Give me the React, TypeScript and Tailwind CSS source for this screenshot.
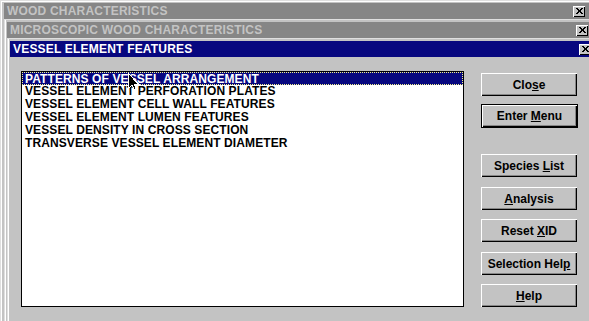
import React from 'react'

type TitleProps = { title: string; active?: boolean }

const ITEMS = [
  'PATTERNS OF VESSEL ARRANGEMENT',
  'VESSEL ELEMENT PERFORATION PLATES',
  'VESSEL ELEMENT CELL WALL FEATURES',
  'VESSEL ELEMENT LUMEN FEATURES',
  'VESSEL DENSITY IN CROSS SECTION',
  'TRANSVERSE VESSEL ELEMENT DIAMETER',
]

function CloseBox() {
  return (
    <div className="w-[12px] h-[11px] bg-[#c3c3c3] shadow-[inset_1px_1px_#fff,inset_-1px_-1px_#000] flex items-center justify-center">
      <svg width="7" height="6" viewBox="0 0 7 6" shapeRendering="crispEdges">
        <path d="M0 0h2v1h1v1h1V1h1V0h2v1H6v1H5v2h1v1h1v1H5V5H4V4H3v1H2v1H0V5h1V4h1V2H1V1H0z" fill="#000" />
      </svg>
    </div>
  )
}

function TitleBar({ title, active }: TitleProps) {
  return (
    <div
      className={`h-[16px] flex items-center justify-between pl-[3px] pr-[4px] ${
        active ? 'bg-[#07077f] text-white' : 'bg-[#868686] text-[#c3c3c3]'
      }`}
    >
      <span className="text-[12px] font-bold leading-none tracking-[0.2px]">{title}</span>
      <CloseBox />
    </div>
  )
}

function Btn({ children, isDefault, className = '' }: { children: React.ReactNode; isDefault?: boolean; className?: string }) {
  const face = (
    <div className="h-full w-full bg-[#c3c3c3] shadow-[inset_1px_1px_#fff,inset_-1px_-1px_#000,inset_-2px_-2px_#868686] flex items-center justify-center text-[12px] font-bold text-black leading-none">
      <span>{children}</span>
    </div>
  )
  if (isDefault) {
    return <div className={`w-[97px] h-[24px] border border-black ${className}`}>{face}</div>
  }
  return <div className={`w-[96px] h-[23px] ${className}`}>{face}</div>
}

export default function App() {
  return (
    <div className="relative w-[589px] h-[321px] overflow-hidden bg-[#c3c3c3] font-['Liberation_Sans',Arial,sans-serif] select-none">
      {/* WOOD CHARACTERISTICS */}
      <div className="h-[330px] pl-[4px] pt-[3px] shadow-[inset_1px_1px_#dfdfdf,inset_2px_2px_#fff]">
        <TitleBar title="WOOD CHARACTERISTICS" />

        {/* MICROSCOPIC WOOD CHARACTERISTICS */}
        <div className="-mr-[3px] h-[320px] pl-[3px] pt-[3px] shadow-[inset_1px_1px_#dfdfdf,inset_2px_0_#fff]">
          <TitleBar title="MICROSCOPIC WOOD CHARACTERISTICS" />

          {/* VESSEL ELEMENT FEATURES */}
          <div className="-mr-[3px] h-[300px] pl-[3px] pt-[3px] shadow-[inset_1px_1px_#dfdfdf,inset_2px_0_#fff]">
            <TitleBar title="VESSEL ELEMENT FEATURES" active />

            <div className="flex pl-[11px] pt-[14px]">
              {/* list */}
              <div className="w-[443px] h-[236px] border border-black bg-white">
                {ITEMS.map((item, i) => (
                  <div
                    key={item}
                    className={`h-[13px] text-[12px] font-bold leading-[13px] whitespace-nowrap tracking-[0.1px] ${
                      i === 0
                        ? 'bg-[#07077f] text-white border border-dotted border-[#f4f48a] pl-[2px] leading-[11px]'
                        : 'text-black pl-[3px]'
                    }`}
                  >
                    {item}
                  </div>
                ))}
              </div>

              {/* buttons */}
              <div className="ml-[17px] flex flex-col">
                <Btn className="mt-[2px]">
                  Clo<u>s</u>e
                </Btn>
                <Btn isDefault className="mt-[8px]">
                  Enter <u>M</u>enu
                </Btn>
                <Btn className="mt-[26px]">
                  Species <u>L</u>ist
                </Btn>
                <Btn className="mt-[10px]">
                  <u>A</u>nalysis
                </Btn>
                <Btn className="mt-[9px]">
                  Reset <u>X</u>ID
                </Btn>
                <Btn className="mt-[10px]">
                  Selection Hel<u>p</u>
                </Btn>
                <Btn className="mt-[9px]">
                  <u>H</u>elp
                </Btn>
              </div>
            </div>
          </div>
        </div>
      </div>

      {/* mouse pointer */}
      <svg className="absolute left-[128px] top-[73px]" width="12" height="19" viewBox="0 0 12 19" shapeRendering="crispEdges">
        <path d="M0.5 0.5 L0.5 15.5 L4 12 L6.5 17.5 L8.5 16.5 L6 11 L10.5 11 Z" fill="#000" stroke="#fff" strokeWidth="1" />
      </svg>
    </div>
  )
}
